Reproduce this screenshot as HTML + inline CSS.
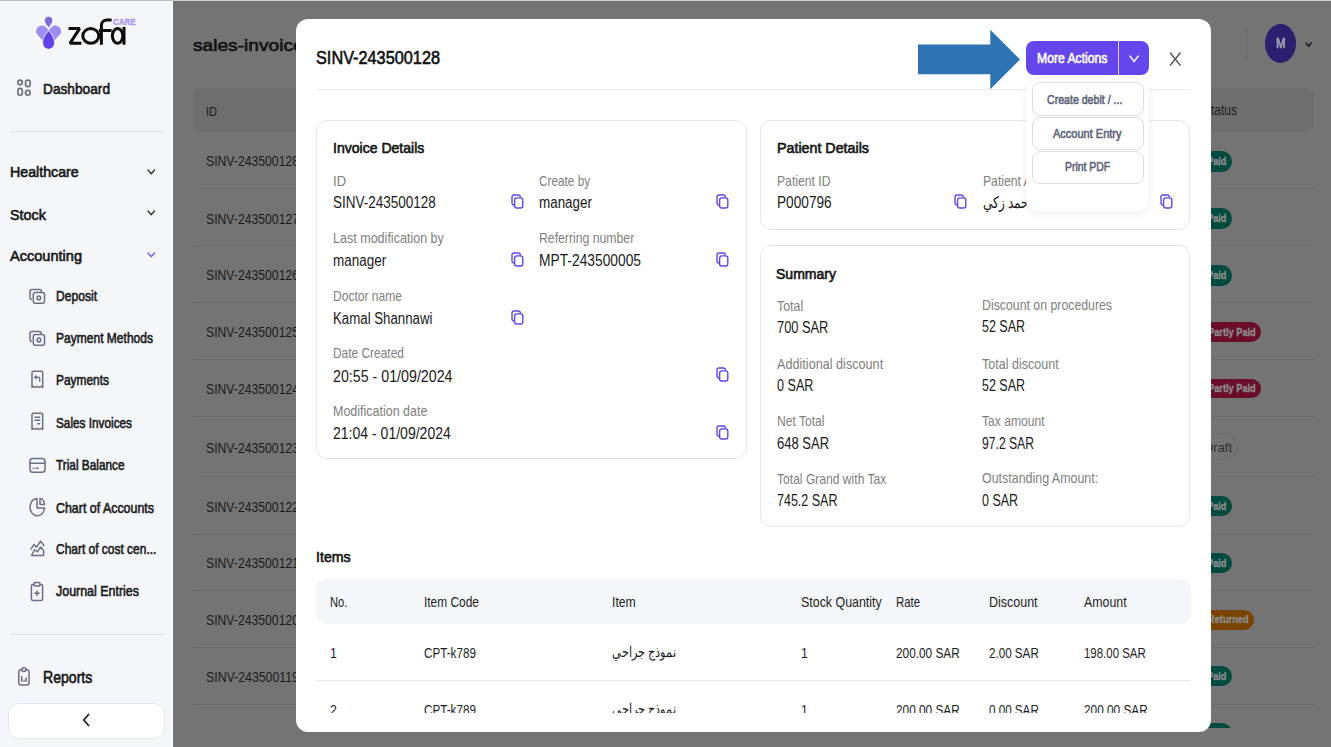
<!DOCTYPE html>
<html><head><meta charset="utf-8"><title>sales-invoices</title>
<style>
html,body{margin:0;padding:0}
body{width:1331px;height:747px;overflow:hidden;position:relative;background:#747474;font-family:"Liberation Sans",sans-serif}
.a{position:absolute}
.t{position:absolute;white-space:nowrap;line-height:1}
</style></head><body>
<div class="a" style="left:173px;top:0;width:1158px;height:747px;background:#747474"></div>
<div class="a" style="left:0;top:0;width:1331px;height:728px;overflow:hidden">
<div class="a" style="left:173px;top:0;width:1158px;height:1px;background:#d2d2d2"></div><div class="a" style="left:173px;top:1px;width:1158px;height:1px;background:#6f6f6f"></div><div class="a" style="left:192.5px;top:88px;width:1121.5px;height:44px;background:#6e6e6e;border-radius:9px"></div><div class="a" style="left:1247px;top:28px;width:1px;height:32px;background:#6a6a6a"></div><div class="a" style="left:1265px;top:24.3px;width:31.3px;height:39px;border-radius:50%;background:#2d1f70"></div><svg class="a" style="left:1303.5px;top:40.5px" width="9.2" height="7.2"><path d="M2 2 L4.6 5.2 L7.2 2" fill="none" stroke="#1a1a1a" stroke-width="1.4" stroke-linecap="round" stroke-linejoin="round"/></svg><div class="a" style="left:192.5px;top:188.2px;width:1121.5px;height:1px;background:#6a6a6a"></div><div class="a" style="left:192.5px;top:245.2px;width:1121.5px;height:1px;background:#6a6a6a"></div><div class="a" style="left:192.5px;top:302.2px;width:1121.5px;height:1px;background:#6a6a6a"></div><div class="a" style="left:192.5px;top:358.8px;width:1121.5px;height:1px;background:#6a6a6a"></div><div class="a" style="left:192.5px;top:415.5px;width:1121.5px;height:1px;background:#6a6a6a"></div><div class="a" style="left:192.5px;top:476.2px;width:1121.5px;height:1px;background:#6a6a6a"></div><div class="a" style="left:192.5px;top:533.5px;width:1121.5px;height:1px;background:#6a6a6a"></div><div class="a" style="left:192.5px;top:590.2px;width:1121.5px;height:1px;background:#6a6a6a"></div><div class="a" style="left:192.5px;top:647.4px;width:1121.5px;height:1px;background:#6a6a6a"></div><div class="a" style="left:192.5px;top:703.5px;width:1121.5px;height:1px;background:#6a6a6a"></div>
<div class="a" style="left:1197.7px;top:151.0px;width:34px;height:20.6px;background:#024b3f;border-radius:11px"></div><div class="a" style="left:1197.7px;top:208.0px;width:34px;height:20.5px;background:#024b3f;border-radius:11px"></div><div class="a" style="left:1197.7px;top:265.0px;width:34px;height:20.5px;background:#024b3f;border-radius:11px"></div><div class="a" style="left:1197.0px;top:321.8px;width:64px;height:19.9px;background:#6a0e2b;border-radius:11px"></div><div class="a" style="left:1197.0px;top:378.5px;width:64px;height:19.7px;background:#6a0e2b;border-radius:11px"></div><div class="a" style="left:1197.7px;top:496.0px;width:34px;height:19.7px;background:#024b3f;border-radius:11px"></div><div class="a" style="left:1197.7px;top:553.0px;width:34px;height:19.8px;background:#024b3f;border-radius:11px"></div><div class="a" style="left:1196.0px;top:609.5px;width:58px;height:20.2px;background:#7a4300;border-radius:11px"></div><div class="a" style="left:1197.7px;top:666.4px;width:34px;height:19.6px;background:#024b3f;border-radius:11px"></div><div class="a" style="left:1197.7px;top:722.9px;width:34px;height:20.1px;background:#024b3f;border-radius:11px"></div><div class="a" style="left:1190px;top:434.4px;width:48px;height:25.4px;border:1px solid #6b6b6b;border-radius:13px;box-sizing:border-box"></div>
<div class="t" style="left:193.20px;top:36.53px;font-size:16.2px;color:#131313;-webkit-text-stroke:0.6px #131313;transform:scaleX(1.182);transform-origin:0 0;">sales-invoices</div>
<div class="t" style="left:205.70px;top:104.55px;font-size:13px;color:#1c1c1c;transform:scaleX(0.850);transform-origin:0 0;">ID</div>
<div class="t" style="left:1203.00px;top:103.20px;font-size:14px;color:#1c1c1c;transform:scaleX(0.856);transform-origin:0 0;">Status</div>
<div class="t" style="left:1275.05px;top:37.17px;font-size:13.8px;color:#a9a7b6;-webkit-text-stroke:0.6px #a9a7b6;transform:scaleX(0.820);transform-origin:50% 0;">M</div>
<div class="t" style="left:205.70px;top:154.48px;font-size:14.5px;color:#1c1c1c;transform:scaleX(0.842);transform-origin:0 0;">SINV-243500128</div>
<div class="t" style="left:205.70px;top:211.88px;font-size:14.5px;color:#1c1c1c;transform:scaleX(0.842);transform-origin:0 0;">SINV-243500127</div>
<div class="t" style="left:205.70px;top:268.18px;font-size:14.5px;color:#1c1c1c;transform:scaleX(0.842);transform-origin:0 0;">SINV-243500126</div>
<div class="t" style="left:205.70px;top:324.78px;font-size:14.5px;color:#1c1c1c;transform:scaleX(0.842);transform-origin:0 0;">SINV-243500125</div>
<div class="t" style="left:205.70px;top:381.78px;font-size:14.5px;color:#1c1c1c;transform:scaleX(0.842);transform-origin:0 0;">SINV-243500124</div>
<div class="t" style="left:205.70px;top:441.07px;font-size:14.5px;color:#1c1c1c;transform:scaleX(0.842);transform-origin:0 0;">SINV-243500123</div>
<div class="t" style="left:205.70px;top:499.68px;font-size:14.5px;color:#1c1c1c;transform:scaleX(0.842);transform-origin:0 0;">SINV-243500122</div>
<div class="t" style="left:205.70px;top:556.47px;font-size:14.5px;color:#1c1c1c;transform:scaleX(0.842);transform-origin:0 0;">SINV-243500121</div>
<div class="t" style="left:205.70px;top:613.17px;font-size:14.5px;color:#1c1c1c;transform:scaleX(0.842);transform-origin:0 0;">SINV-243500120</div>
<div class="t" style="left:205.70px;top:670.38px;font-size:14.5px;color:#1c1c1c;transform:scaleX(0.850);transform-origin:0 0;">SINV-243500119</div>
<div class="t" style="left:205.70px;top:727.17px;font-size:14.5px;color:#1c1c1c;transform:scaleX(0.850);transform-origin:0 0;">SINV-243500118</div>
<div class="t" style="left:1206.68px;top:156.05px;font-size:11px;color:#8c8c8c;font-weight:700;transform:scaleX(0.840);transform-origin:0 0;-webkit-text-stroke:0.35px #8c8c8c;">Paid</div>
<div class="t" style="left:1206.68px;top:213.00px;font-size:11px;color:#8c8c8c;font-weight:700;transform:scaleX(0.840);transform-origin:0 0;-webkit-text-stroke:0.35px #8c8c8c;">Paid</div>
<div class="t" style="left:1206.68px;top:270.00px;font-size:11px;color:#8c8c8c;font-weight:700;transform:scaleX(0.840);transform-origin:0 0;-webkit-text-stroke:0.35px #8c8c8c;">Paid</div>
<div class="t" style="left:1207.74px;top:326.50px;font-size:11px;color:#8c8c8c;font-weight:700;transform:scaleX(0.840);transform-origin:0 0;-webkit-text-stroke:0.35px #8c8c8c;">Partly Paid</div>
<div class="t" style="left:1207.74px;top:383.10px;font-size:11px;color:#8c8c8c;font-weight:700;transform:scaleX(0.840);transform-origin:0 0;-webkit-text-stroke:0.35px #8c8c8c;">Partly Paid</div>
<div class="t" style="left:1206.68px;top:500.60px;font-size:11px;color:#8c8c8c;font-weight:700;transform:scaleX(0.840);transform-origin:0 0;-webkit-text-stroke:0.35px #8c8c8c;">Paid</div>
<div class="t" style="left:1206.68px;top:557.65px;font-size:11px;color:#8c8c8c;font-weight:700;transform:scaleX(0.840);transform-origin:0 0;-webkit-text-stroke:0.35px #8c8c8c;">Paid</div>
<div class="t" style="left:1207.94px;top:614.35px;font-size:11px;color:#8c8c8c;font-weight:700;transform:scaleX(0.840);transform-origin:0 0;-webkit-text-stroke:0.35px #8c8c8c;">Returned</div>
<div class="t" style="left:1206.68px;top:670.95px;font-size:11px;color:#8c8c8c;font-weight:700;transform:scaleX(0.840);transform-origin:0 0;-webkit-text-stroke:0.35px #8c8c8c;">Paid</div>
<div class="t" style="left:1206.68px;top:727.70px;font-size:11px;color:#8c8c8c;font-weight:700;transform:scaleX(0.840);transform-origin:0 0;-webkit-text-stroke:0.35px #8c8c8c;">Paid</div>
<div class="t" style="left:1203.50px;top:441.02px;font-size:13.5px;color:#303030;transform:scaleX(0.957);transform-origin:0 0;">Draft</div>
</div>
<div class="a" style="left:0;top:0;width:173px;height:747px;background:#f5f6fa;border-right:0">
<div class="a" style="left:171px;top:0;width:2px;height:747px;background:#fbfcff"></div>
<div class="a" style="left:0;top:0;width:173px;height:1px;background:#c0c0c0"></div>
<div class="a" style="left:10px;top:131px;width:155px;height:1px;background:#e1e2e6"></div>
<div class="a" style="left:10px;top:634px;width:155px;height:1px;background:#e1e2e6"></div>
<div class="a" style="left:7.5px;top:702.5px;width:155px;height:34px;background:#fff;border:1px solid #e6e7ec;border-radius:11px"></div>
<svg class="a" style="left:30px;top:10px" width="115" height="45" viewBox="0 0 115 45">
<g fill="#9d8ff6"><circle cx="11.9" cy="21.3" r="5.7"/><circle cx="25.3" cy="21.3" r="5.7"/>
<path d="M6.25 22.6 L18.6 38.6 L30.95 22.6 L25.3 15.6 L18.6 20 L11.9 15.6 Z"/></g>
<path d="M18.6 20.6 C21.5 24 24.6 27.5 24.6 32.6 C24.6 36.4 22 39.2 18.6 39.2 C15.2 39.2 12.6 36.4 12.6 32.6 C12.6 27.5 15.7 24 18.6 20.6 Z" fill="#5f43e9" stroke="#f5f6fa" stroke-width="0.9"/>
<path d="M18.6 17.8 C17.5 16.2 14.4 13.5 14.4 10.6 C14.4 8 16.3 6.2 18.6 6.2 C20.9 6.2 22.8 8 22.8 10.6 C22.8 13.5 19.7 16.2 18.6 17.8 Z" fill="#7b6fe0" stroke="#f5f6fa" stroke-width="0.9"/>
<text x="83" y="14.8" font-family="Liberation Sans" font-weight="700" font-size="9.6" fill="#a797f7" stroke="#a797f7" stroke-width="0.35" textLength="22.6" lengthAdjust="spacingAndGlyphs">CARE</text>
<g fill="none" stroke="#0b0b0b" stroke-width="3">
<path d="M38.6 18.6 H49.6 L40 33.2 H51.4" stroke-linejoin="bevel"/>
<ellipse cx="60.8" cy="25.9" rx="8" ry="7.3"/>
<path d="M71.4 34.7 V15.5 A5.5 5.5 0 0 1 76.9 10 H81.6 M68.8 20.6 H81.6"/>
<ellipse cx="87.6" cy="25.9" rx="5.2" ry="7.3"/>
<path d="M94 17 V34.7"/></g>
</svg>
<svg class="a" style="left:16px;top:78px" width="16" height="19" viewBox="0 0 16 19" fill="none" stroke="#6b7184" stroke-width="1.7">
<rect x="1.9" y="2.05" width="4.4" height="4.75" rx="2.2"/><rect x="9.55" y="2.05" width="4.56" height="6.7" rx="2.2"/>
<rect x="1.9" y="10.4" width="4.4" height="6.84" rx="2.2"/><rect x="9.55" y="12.35" width="4.56" height="4.89" rx="2.2"/></svg><svg class="a" style="left:145.8px;top:167.8px" width="10.5" height="7.7"><path d="M2 2 L5.25 5.7 L8.5 2" fill="none" stroke="#333" stroke-width="1.35" stroke-linecap="round" stroke-linejoin="round"/></svg><svg class="a" style="left:145.8px;top:209.3px" width="10.5" height="7.7"><path d="M2 2 L5.25 5.7 L8.5 2" fill="none" stroke="#333" stroke-width="1.35" stroke-linecap="round" stroke-linejoin="round"/></svg><svg class="a" style="left:145.8px;top:251.3px" width="10.5" height="7.7"><path d="M2 2 L5.25 5.7 L8.5 2" fill="none" stroke="#6a5cf0" stroke-width="1.35" stroke-linecap="round" stroke-linejoin="round"/></svg><svg class="a" style="left:28.5px;top:288px" width="17" height="17" viewBox="0 0 17 17" fill="none" stroke="#6b7184" stroke-width="1.5" stroke-linejoin="round">
<path d="M3 11.5 H2.8 A1.8 1.8 0 0 1 1 9.7 V3.3 A1.8 1.8 0 0 1 2.8 1.5 H10.5 A1.8 1.8 0 0 1 12.3 3.3 V4"/>
<rect x="4.3" y="4.6" width="11.2" height="10.6" rx="2"/><circle cx="9.9" cy="9.9" r="1.8"/></svg><svg class="a" style="left:28.5px;top:330px" width="17" height="17" viewBox="0 0 17 17" fill="none" stroke="#6b7184" stroke-width="1.5" stroke-linejoin="round">
<path d="M3 11.5 H2.8 A1.8 1.8 0 0 1 1 9.7 V3.3 A1.8 1.8 0 0 1 2.8 1.5 H10.5 A1.8 1.8 0 0 1 12.3 3.3 V4"/>
<rect x="4.3" y="4.6" width="11.2" height="10.6" rx="2"/><circle cx="9.9" cy="9.9" r="1.8"/></svg><svg class="a" style="left:29px;top:370px" width="17" height="19" viewBox="0 0 17 19" fill="none" stroke="#6b7184" stroke-width="1.5" stroke-linejoin="round" stroke-linecap="round">
<path d="M3 17.5 V2.8 A1.5 1.5 0 0 1 4.5 1.3 H12.2 A1.5 1.5 0 0 1 13.7 2.8 V17.5 L11.9 16.3 L10.1 17.5 L8.3 16.3 L6.5 17.5 L4.7 16.3 Z"/>
<path d="M7 6 L5.8 7.3 L7 8.6 M5.9 7.3 H9.2 A1.5 1.5 0 0 1 10.7 8.8 V11"/></svg><svg class="a" style="left:29px;top:412px" width="17" height="19" viewBox="0 0 17 19" fill="none" stroke="#6b7184" stroke-width="1.5" stroke-linejoin="round" stroke-linecap="round">
<path d="M3 17.5 V2.8 A1.5 1.5 0 0 1 4.5 1.3 H12.2 A1.5 1.5 0 0 1 13.7 2.8 V17.5 L11.9 16.3 L10.1 17.5 L8.3 16.3 L6.5 17.5 L4.7 16.3 Z"/>
<path d="M6 5.3 H10.7 M6 8.3 H10.7 M8.6 11.8 H10.7"/></svg><svg class="a" style="left:28.5px;top:456.8px" width="17" height="17" viewBox="0 0 17 17" fill="none" stroke="#6b7184" stroke-width="1.5" stroke-linecap="round">
<rect x="1" y="1.5" width="15" height="13.8" rx="2.8"/><path d="M1 6.2 H16 M4.3 11.2 H5 M7.2 11.2 H9"/></svg><svg class="a" style="left:28.5px;top:496px" width="19" height="22" viewBox="0 0 19 22" fill="none" stroke="#6b7184" stroke-width="1.5" stroke-linejoin="round">
<path d="M8 2.4 V11.9 H15.6 A7.3 8.7 0 1 1 8 2.4 Z"/><path d="M11 2.4 V8.5 H15.4 A4.6 6.1 0 0 0 11 2.4 Z"/></svg><svg class="a" style="left:28.5px;top:540px" width="18" height="18" viewBox="0 0 18 18" fill="none" stroke="#6b7184" stroke-width="1.5" stroke-linejoin="round" stroke-linecap="round">
<path d="M1.94 9.05 L4.9 4.7 L7.68 7 L11.5 1.2 L15 5.4"/><path d="M2.46 15.5 L5.6 9.75 L8.4 11.8 L11.5 7.1 L14.6 10.6 V15.5 Z"/></svg><svg class="a" style="left:30px;top:581px" width="15" height="21" viewBox="0 0 15 21" fill="none" stroke="#6b7184" stroke-width="1.5" stroke-linejoin="round" stroke-linecap="round">
<path d="M3.9 3.4 H3 A1.6 1.6 0 0 0 1.4 5 V17.9 A1.6 1.6 0 0 0 3 19.5 H11 A1.6 1.6 0 0 0 12.6 17.9 V5 A1.6 1.6 0 0 0 11 3.4 H10.1"/>
<rect x="3.9" y="1.5" width="6.2" height="3.6" rx="1.5"/><path d="M7 10 V14.6 M4.8 12.3 H9.2"/></svg><svg class="a" style="left:17px;top:666px" width="15" height="21" viewBox="0 0 15 21" fill="none" stroke="#6b7184" stroke-width="1.5" stroke-linejoin="round" stroke-linecap="round">
<path d="M4.7 3.7 H3.8 A2 2 0 0 0 1.8 5.7 V17 A2 2 0 0 0 3.8 19 H10 A2 2 0 0 0 12 17 V5.7 A2 2 0 0 0 10 3.7 H9.1"/>
<ellipse cx="6.9" cy="3.6" rx="2.2" ry="1.9"/><path d="M4.7 10.6 V15.2 M7.1 14.2 V15.2 M9.2 12 V15.2"/></svg><svg class="a" style="left:81px;top:712px" width="10" height="16"><path d="M7.5 2.5 L2.8 8 L7.5 13.5" fill="none" stroke="#1e1e1e" stroke-width="1.8" stroke-linecap="round" stroke-linejoin="round"/></svg>
<div class="t" style="left:43.00px;top:80.88px;font-size:15.2px;color:#161616;-webkit-text-stroke:0.6px #161616;transform:scaleX(0.902);transform-origin:0 0;">Dashboard</div>
<div class="t" style="left:10.00px;top:165.30px;font-size:14.7px;color:#161616;-webkit-text-stroke:0.6px #161616;transform:scaleX(0.967);transform-origin:0 0;">Healthcare</div>
<div class="t" style="left:10.00px;top:207.60px;font-size:14.7px;color:#161616;-webkit-text-stroke:0.6px #161616;transform:scaleX(0.975);transform-origin:0 0;">Stock</div>
<div class="t" style="left:10.00px;top:248.60px;font-size:14.7px;color:#161616;-webkit-text-stroke:0.6px #161616;transform:scaleX(0.991);transform-origin:0 0;">Accounting</div>
<div class="t" style="left:55.80px;top:288.83px;font-size:14.2px;color:#1c1c1c;-webkit-text-stroke:0.6px #1c1c1c;transform:scaleX(0.852);transform-origin:0 0;">Deposit</div>
<div class="t" style="left:55.80px;top:331.33px;font-size:14.2px;color:#1c1c1c;-webkit-text-stroke:0.6px #1c1c1c;transform:scaleX(0.848);transform-origin:0 0;">Payment Methods</div>
<div class="t" style="left:55.80px;top:373.23px;font-size:14.2px;color:#1c1c1c;-webkit-text-stroke:0.6px #1c1c1c;transform:scaleX(0.840);transform-origin:0 0;">Payments</div>
<div class="t" style="left:55.80px;top:415.53px;font-size:14.2px;color:#1c1c1c;-webkit-text-stroke:0.6px #1c1c1c;transform:scaleX(0.831);transform-origin:0 0;">Sales Invoices</div>
<div class="t" style="left:55.80px;top:458.13px;font-size:14.2px;color:#1c1c1c;-webkit-text-stroke:0.6px #1c1c1c;transform:scaleX(0.834);transform-origin:0 0;">Trial Balance</div>
<div class="t" style="left:55.80px;top:500.53px;font-size:14.2px;color:#1c1c1c;-webkit-text-stroke:0.6px #1c1c1c;transform:scaleX(0.875);transform-origin:0 0;">Chart of Accounts</div>
<div class="t" style="left:55.80px;top:541.93px;font-size:14.2px;color:#1c1c1c;-webkit-text-stroke:0.6px #1c1c1c;transform:scaleX(0.843);transform-origin:0 0;">Chart of cost cen...</div>
<div class="t" style="left:55.80px;top:584.33px;font-size:14.2px;color:#1c1c1c;-webkit-text-stroke:0.6px #1c1c1c;transform:scaleX(0.877);transform-origin:0 0;">Journal Entries</div>
<div class="t" style="left:42.50px;top:669.75px;font-size:15.7px;color:#161616;-webkit-text-stroke:0.6px #161616;transform:scaleX(0.897);transform-origin:0 0;">Reports</div>
</div>
<div class="a" style="left:296px;top:19px;width:915px;height:713px;background:#fff;border-radius:12px;overflow:hidden">
<div class="a" style="left:20px;top:70px;width:875px;height:1px;background:#ececee"></div>
<div class="a" style="left:0;top:0;width:915px;height:694px;overflow:hidden">
<div class="a" style="left:19.7px;top:101px;width:429.2px;height:336.9px;border:1px solid #e7e7ea;border-radius:11px"></div>
<div class="a" style="left:464.3px;top:101.3px;width:428px;height:107.3px;border:1px solid #e7e7ea;border-radius:11px"></div>
<div class="a" style="left:464.4px;top:226.4px;width:428px;height:279.2px;border:1px solid #e7e7ea;border-radius:11px"></div>
<div class="a" style="left:19.5px;top:560.2px;width:875.5px;height:45px;background:#f5f6fa;border-radius:9px"></div>
<div class="a" style="left:20px;top:660.8px;width:875px;height:1px;background:#e6e6e9"></div>
<svg class="a" style="left:214.5px;top:175px" width="13" height="15" viewBox="0 0 13 15" fill="none" stroke="#5b48e6" stroke-width="1.4" stroke-linejoin="round">
<path d="M3.2 11 H2.9 A1.9 1.9 0 0 1 1 9.1 V2.9 A1.9 1.9 0 0 1 2.9 1 H7.4 A1.9 1.9 0 0 1 9.3 2.9 V3.6"/>
<rect x="3.6" y="3.9" width="8.2" height="10.1" rx="2.2"/></svg><svg class="a" style="left:214.5px;top:232.5px" width="13" height="15" viewBox="0 0 13 15" fill="none" stroke="#5b48e6" stroke-width="1.4" stroke-linejoin="round">
<path d="M3.2 11 H2.9 A1.9 1.9 0 0 1 1 9.1 V2.9 A1.9 1.9 0 0 1 2.9 1 H7.4 A1.9 1.9 0 0 1 9.3 2.9 V3.6"/>
<rect x="3.6" y="3.9" width="8.2" height="10.1" rx="2.2"/></svg><svg class="a" style="left:214.5px;top:290.5px" width="13" height="15" viewBox="0 0 13 15" fill="none" stroke="#5b48e6" stroke-width="1.4" stroke-linejoin="round">
<path d="M3.2 11 H2.9 A1.9 1.9 0 0 1 1 9.1 V2.9 A1.9 1.9 0 0 1 2.9 1 H7.4 A1.9 1.9 0 0 1 9.3 2.9 V3.6"/>
<rect x="3.6" y="3.9" width="8.2" height="10.1" rx="2.2"/></svg><svg class="a" style="left:420.29999999999995px;top:175px" width="13" height="15" viewBox="0 0 13 15" fill="none" stroke="#5b48e6" stroke-width="1.4" stroke-linejoin="round">
<path d="M3.2 11 H2.9 A1.9 1.9 0 0 1 1 9.1 V2.9 A1.9 1.9 0 0 1 2.9 1 H7.4 A1.9 1.9 0 0 1 9.3 2.9 V3.6"/>
<rect x="3.6" y="3.9" width="8.2" height="10.1" rx="2.2"/></svg><svg class="a" style="left:420.29999999999995px;top:232.5px" width="13" height="15" viewBox="0 0 13 15" fill="none" stroke="#5b48e6" stroke-width="1.4" stroke-linejoin="round">
<path d="M3.2 11 H2.9 A1.9 1.9 0 0 1 1 9.1 V2.9 A1.9 1.9 0 0 1 2.9 1 H7.4 A1.9 1.9 0 0 1 9.3 2.9 V3.6"/>
<rect x="3.6" y="3.9" width="8.2" height="10.1" rx="2.2"/></svg><svg class="a" style="left:420.29999999999995px;top:347.5px" width="13" height="15" viewBox="0 0 13 15" fill="none" stroke="#5b48e6" stroke-width="1.4" stroke-linejoin="round">
<path d="M3.2 11 H2.9 A1.9 1.9 0 0 1 1 9.1 V2.9 A1.9 1.9 0 0 1 2.9 1 H7.4 A1.9 1.9 0 0 1 9.3 2.9 V3.6"/>
<rect x="3.6" y="3.9" width="8.2" height="10.1" rx="2.2"/></svg><svg class="a" style="left:420.29999999999995px;top:405.5px" width="13" height="15" viewBox="0 0 13 15" fill="none" stroke="#5b48e6" stroke-width="1.4" stroke-linejoin="round">
<path d="M3.2 11 H2.9 A1.9 1.9 0 0 1 1 9.1 V2.9 A1.9 1.9 0 0 1 2.9 1 H7.4 A1.9 1.9 0 0 1 9.3 2.9 V3.6"/>
<rect x="3.6" y="3.9" width="8.2" height="10.1" rx="2.2"/></svg><svg class="a" style="left:658.3px;top:175px" width="13" height="15" viewBox="0 0 13 15" fill="none" stroke="#5b48e6" stroke-width="1.4" stroke-linejoin="round">
<path d="M3.2 11 H2.9 A1.9 1.9 0 0 1 1 9.1 V2.9 A1.9 1.9 0 0 1 2.9 1 H7.4 A1.9 1.9 0 0 1 9.3 2.9 V3.6"/>
<rect x="3.6" y="3.9" width="8.2" height="10.1" rx="2.2"/></svg><svg class="a" style="left:864.3px;top:175px" width="13" height="15" viewBox="0 0 13 15" fill="none" stroke="#5b48e6" stroke-width="1.4" stroke-linejoin="round">
<path d="M3.2 11 H2.9 A1.9 1.9 0 0 1 1 9.1 V2.9 A1.9 1.9 0 0 1 2.9 1 H7.4 A1.9 1.9 0 0 1 9.3 2.9 V3.6"/>
<rect x="3.6" y="3.9" width="8.2" height="10.1" rx="2.2"/></svg>
<svg class="a" style="left:686.60px;top:169.40px;overflow:visible" width="49.0" height="28.1"><text x="24.50" y="19.50" text-anchor="middle" direction="rtl" font-family="Liberation Sans" font-size="15.6" fill="#1b1b1b" textLength="49.0" lengthAdjust="spacingAndGlyphs">أحمد زكي</text></svg><svg class="a" style="left:316.40px;top:620.48px;overflow:visible" width="64.2" height="26.1"><text x="32.10" y="18.12" text-anchor="middle" direction="rtl" font-family="Liberation Sans" font-size="14.5" fill="#1e1e1e" textLength="64.2" lengthAdjust="spacingAndGlyphs">نموذج جراحي</text></svg><svg class="a" style="left:316.40px;top:677.48px;overflow:visible" width="64.2" height="26.1"><text x="32.10" y="18.12" text-anchor="middle" direction="rtl" font-family="Liberation Sans" font-size="14.5" fill="#1e1e1e" textLength="64.2" lengthAdjust="spacingAndGlyphs">نموذج جراحي</text></svg>
<div class="t" style="left:36.50px;top:122.23px;font-size:14.2px;color:#141414;-webkit-text-stroke:0.6px #141414;transform:scaleX(0.990);transform-origin:0 0;">Invoice Details</div>
<div class="t" style="left:36.50px;top:155.08px;font-size:14.5px;color:#808080;transform:scaleX(0.900);transform-origin:0 0;">ID</div>
<div class="t" style="left:36.50px;top:176.14px;font-size:15.6px;color:#1b1b1b;transform:scaleX(0.865);transform-origin:0 0;">SINV-243500128</div>
<div class="t" style="left:242.60px;top:155.38px;font-size:14.5px;color:#808080;transform:scaleX(0.814);transform-origin:0 0;">Create by</div>
<div class="t" style="left:242.60px;top:176.34px;font-size:15.6px;color:#1b1b1b;transform:scaleX(0.861);transform-origin:0 0;">manager</div>
<div class="t" style="left:36.50px;top:211.98px;font-size:14.5px;color:#808080;transform:scaleX(0.865);transform-origin:0 0;">Last modification by</div>
<div class="t" style="left:36.50px;top:234.24px;font-size:15.6px;color:#1b1b1b;transform:scaleX(0.866);transform-origin:0 0;">manager</div>
<div class="t" style="left:242.60px;top:212.38px;font-size:14.5px;color:#808080;transform:scaleX(0.844);transform-origin:0 0;">Referring number</div>
<div class="t" style="left:242.60px;top:233.94px;font-size:15.6px;color:#1b1b1b;transform:scaleX(0.885);transform-origin:0 0;">MPT-243500005</div>
<div class="t" style="left:36.50px;top:270.18px;font-size:14.5px;color:#808080;transform:scaleX(0.831);transform-origin:0 0;">Doctor name</div>
<div class="t" style="left:36.50px;top:291.54px;font-size:15.6px;color:#1b1b1b;transform:scaleX(0.850);transform-origin:0 0;">Kamal Shannawi</div>
<div class="t" style="left:36.50px;top:327.18px;font-size:14.5px;color:#808080;transform:scaleX(0.822);transform-origin:0 0;">Date Created</div>
<div class="t" style="left:36.50px;top:349.54px;font-size:15.6px;color:#1b1b1b;transform:scaleX(0.913);transform-origin:0 0;">20:55 - 01/09/2024</div>
<div class="t" style="left:36.50px;top:385.18px;font-size:14.5px;color:#808080;transform:scaleX(0.861);transform-origin:0 0;">Modification date</div>
<div class="t" style="left:36.50px;top:406.74px;font-size:15.6px;color:#1b1b1b;transform:scaleX(0.900);transform-origin:0 0;">21:04 - 01/09/2024</div>
<div class="t" style="left:480.70px;top:122.43px;font-size:14.2px;color:#141414;-webkit-text-stroke:0.6px #141414;transform:scaleX(1.005);transform-origin:0 0;">Patient Details</div>
<div class="t" style="left:480.70px;top:155.28px;font-size:14.5px;color:#808080;transform:scaleX(0.839);transform-origin:0 0;">Patient ID</div>
<div class="t" style="left:480.70px;top:176.34px;font-size:15.6px;color:#1b1b1b;transform:scaleX(0.876);transform-origin:0 0;">P000796</div>
<div class="t" style="left:686.60px;top:155.28px;font-size:14.5px;color:#808080;transform:scaleX(0.839);transform-origin:0 0;">Patient Arabic name</div>
<div class="t" style="left:480.40px;top:247.73px;font-size:14.2px;color:#141414;-webkit-text-stroke:0.6px #141414;transform:scaleX(0.988);transform-origin:0 0;">Summary</div>
<div class="t" style="left:480.50px;top:279.88px;font-size:14.5px;color:#808080;transform:scaleX(0.855);transform-origin:0 0;">Total</div>
<div class="t" style="left:480.50px;top:300.84px;font-size:15.6px;color:#1b1b1b;transform:scaleX(0.823);transform-origin:0 0;">700 SAR</div>
<div class="t" style="left:480.50px;top:337.68px;font-size:14.5px;color:#808080;transform:scaleX(0.872);transform-origin:0 0;">Additional discount</div>
<div class="t" style="left:480.50px;top:358.74px;font-size:15.6px;color:#1b1b1b;transform:scaleX(0.807);transform-origin:0 0;">0 SAR</div>
<div class="t" style="left:480.50px;top:394.98px;font-size:14.5px;color:#808080;transform:scaleX(0.834);transform-origin:0 0;">Net Total</div>
<div class="t" style="left:480.50px;top:416.64px;font-size:15.6px;color:#1b1b1b;transform:scaleX(0.835);transform-origin:0 0;">648 SAR</div>
<div class="t" style="left:480.50px;top:452.68px;font-size:14.5px;color:#808080;transform:scaleX(0.834);transform-origin:0 0;">Total Grand with Tax</div>
<div class="t" style="left:480.50px;top:473.94px;font-size:15.6px;color:#1b1b1b;transform:scaleX(0.802);transform-origin:0 0;">745.2 SAR</div>
<div class="t" style="left:686.40px;top:279.07px;font-size:14.5px;color:#808080;transform:scaleX(0.849);transform-origin:0 0;">Discount on procedures</div>
<div class="t" style="left:686.40px;top:300.44px;font-size:15.6px;color:#1b1b1b;transform:scaleX(0.800);transform-origin:0 0;">52 SAR</div>
<div class="t" style="left:686.40px;top:337.88px;font-size:14.5px;color:#808080;transform:scaleX(0.865);transform-origin:0 0;">Total discount</div>
<div class="t" style="left:686.40px;top:358.94px;font-size:15.6px;color:#1b1b1b;transform:scaleX(0.800);transform-origin:0 0;">52 SAR</div>
<div class="t" style="left:686.40px;top:394.68px;font-size:14.5px;color:#808080;transform:scaleX(0.835);transform-origin:0 0;">Tax amount</div>
<div class="t" style="left:686.40px;top:416.74px;font-size:15.6px;color:#1b1b1b;transform:scaleX(0.779);transform-origin:0 0;">97.2 SAR</div>
<div class="t" style="left:686.40px;top:452.48px;font-size:14.5px;color:#808080;transform:scaleX(0.858);transform-origin:0 0;">Outstanding Amount:</div>
<div class="t" style="left:686.40px;top:473.94px;font-size:15.6px;color:#1b1b1b;transform:scaleX(0.799);transform-origin:0 0;">0 SAR</div>
<div class="t" style="left:20.20px;top:531.00px;font-size:14.7px;color:#141414;-webkit-text-stroke:0.6px #141414;transform:scaleX(0.966);transform-origin:0 0;">Items</div>
<div class="t" style="left:33.50px;top:576.17px;font-size:14.5px;color:#1e1e1e;transform:scaleX(0.771);transform-origin:0 0;">No.</div>
<div class="t" style="left:127.60px;top:576.17px;font-size:14.5px;color:#1e1e1e;transform:scaleX(0.822);transform-origin:0 0;">Item Code</div>
<div class="t" style="left:316.40px;top:576.17px;font-size:14.5px;color:#1e1e1e;transform:scaleX(0.840);transform-origin:0 0;">Item</div>
<div class="t" style="left:504.80px;top:576.17px;font-size:14.5px;color:#1e1e1e;transform:scaleX(0.856);transform-origin:0 0;">Stock Quantity</div>
<div class="t" style="left:599.60px;top:576.17px;font-size:14.5px;color:#1e1e1e;transform:scaleX(0.787);transform-origin:0 0;">Rate</div>
<div class="t" style="left:693.40px;top:576.17px;font-size:14.5px;color:#1e1e1e;transform:scaleX(0.861);transform-origin:0 0;">Discount</div>
<div class="t" style="left:787.90px;top:576.17px;font-size:14.5px;color:#1e1e1e;transform:scaleX(0.852);transform-origin:0 0;">Amount</div>
<div class="t" style="left:33.50px;top:626.77px;font-size:14.5px;color:#1e1e1e;transform:scaleX(0.850);transform-origin:0 0;">1</div>
<div class="t" style="left:127.60px;top:626.77px;font-size:14.5px;color:#1e1e1e;transform:scaleX(0.806);transform-origin:0 0;">CPT-k789</div>
<div class="t" style="left:504.80px;top:626.77px;font-size:14.5px;color:#1e1e1e;transform:scaleX(0.850);transform-origin:0 0;">1</div>
<div class="t" style="left:599.60px;top:626.77px;font-size:14.5px;color:#1e1e1e;transform:scaleX(0.815);transform-origin:0 0;">200.00 SAR</div>
<div class="t" style="left:693.40px;top:626.77px;font-size:14.5px;color:#1e1e1e;transform:scaleX(0.802);transform-origin:0 0;">2.00 SAR</div>
<div class="t" style="left:787.90px;top:626.77px;font-size:14.5px;color:#1e1e1e;transform:scaleX(0.790);transform-origin:0 0;">198.00 SAR</div>
<div class="t" style="left:33.50px;top:683.77px;font-size:14.5px;color:#1e1e1e;transform:scaleX(0.850);transform-origin:0 0;">2</div>
<div class="t" style="left:127.60px;top:683.77px;font-size:14.5px;color:#1e1e1e;transform:scaleX(0.806);transform-origin:0 0;">CPT-k789</div>
<div class="t" style="left:504.80px;top:683.77px;font-size:14.5px;color:#1e1e1e;transform:scaleX(0.850);transform-origin:0 0;">1</div>
<div class="t" style="left:599.60px;top:683.77px;font-size:14.5px;color:#1e1e1e;transform:scaleX(0.815);transform-origin:0 0;">200.00 SAR</div>
<div class="t" style="left:693.40px;top:683.77px;font-size:14.5px;color:#1e1e1e;transform:scaleX(0.802);transform-origin:0 0;">0.00 SAR</div>
<div class="t" style="left:787.90px;top:683.77px;font-size:14.5px;color:#1e1e1e;transform:scaleX(0.815);transform-origin:0 0;">200.00 SAR</div>
</div>
</div>
<svg class="a" style="left:0;top:0" width="1331" height="747">
<polygon points="918,44.5 990.3,44.5 990.3,29.7 1020.1,59.5 990.3,89.2 990.3,74.2 918,74.2" fill="#2e74b5"/>
</svg>
<div class="a" style="left:1026.3px;top:41.3px;width:122.8px;height:33.8px;background:#6446ec;border-radius:8px"></div>
<div class="a" style="left:1118.3px;top:41.3px;width:1.2px;height:33.8px;background:#d9d2fb"></div>
<svg class="a" style="left:1128px;top:54px" width="12.3" height="9.5"><path d="M2 2 L6.15 7.5 L10.3 2" fill="none" stroke="#ffffff" stroke-width="1.4" stroke-linecap="round" stroke-linejoin="round"/></svg>
<svg class="a" style="left:1167px;top:50px" width="17" height="18"><path d="M3.4 3 L13.1 15.1 M13.1 3 L3.4 15.1" stroke="#555" stroke-width="1.5" stroke-linecap="round"/></svg>
<div class="a" style="left:1026.2px;top:80.8px;width:122.9px;height:130.2px;background:#fff;border-radius:10px;box-shadow:0 2px 8px rgba(0,0,0,0.07)"></div>
<div class="a" style="left:1032px;top:82.4px;width:111.7px;height:33.4px;border:1px solid #dcdce2;border-radius:8px;box-sizing:border-box"></div>
<div class="a" style="left:1032px;top:116.6px;width:111.7px;height:33.4px;border:1px solid #dcdce2;border-radius:8px;box-sizing:border-box"></div>
<div class="a" style="left:1032px;top:150.6px;width:111.7px;height:33.4px;border:1px solid #dcdce2;border-radius:8px;box-sizing:border-box"></div>
<div class="t" style="left:316.20px;top:49.43px;font-size:18.2px;color:#111111;-webkit-text-stroke:0.6px #111111;transform:scaleX(0.895);transform-origin:0 0;">SINV-243500128</div>
<div class="t" style="left:1036.80px;top:51.23px;font-size:14.2px;color:#ffffff;-webkit-text-stroke:0.6px #ffffff;transform:scaleX(0.858);transform-origin:0 0;">More Actions</div>
<div class="t" style="left:1047.20px;top:93.08px;font-size:13.2px;color:#5c6378;-webkit-text-stroke:0.6px #5c6378;transform:scaleX(0.803);transform-origin:0 0;">Create debit / ...</div>
<div class="t" style="left:1053.40px;top:127.08px;font-size:13.2px;color:#5c6378;-webkit-text-stroke:0.6px #5c6378;transform:scaleX(0.834);transform-origin:0 0;">Account Entry</div>
<div class="t" style="left:1065.20px;top:160.48px;font-size:13.2px;color:#5c6378;-webkit-text-stroke:0.6px #5c6378;transform:scaleX(0.789);transform-origin:0 0;">Print PDF</div>

</body></html>
